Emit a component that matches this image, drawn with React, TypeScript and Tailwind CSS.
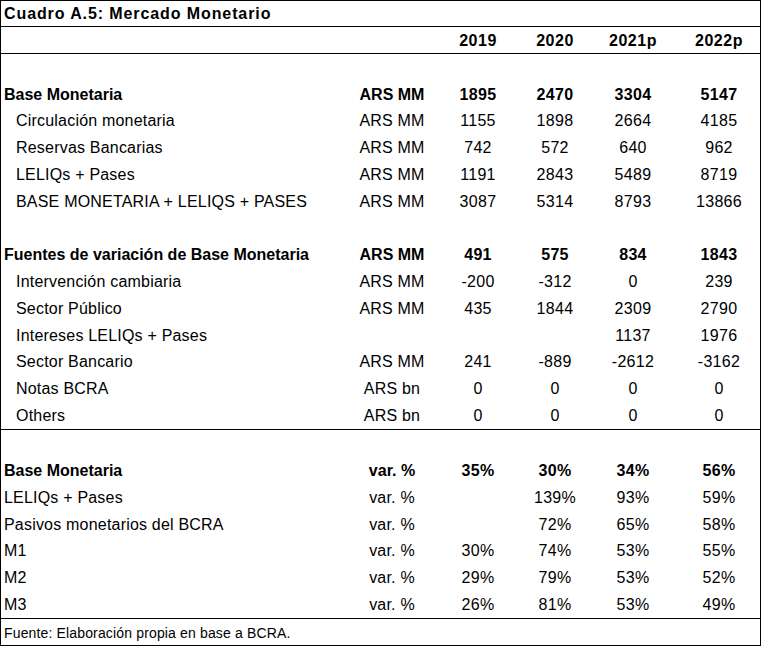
import React from 'react';

type Row = {
  label?: string;
  unit?: string;
  values?: string[];
  bold?: boolean;
  indent?: boolean;
};

const cols = 'grid grid-cols-[349px_84px_88px_66px_90px_82px] items-center';

const monetaria: Row[] = [
  {},
  { label: 'Base Monetaria', unit: 'ARS MM', values: ['1895', '2470', '3304', '5147'], bold: true },
  { label: 'Circulación monetaria', unit: 'ARS MM', values: ['1155', '1898', '2664', '4185'], indent: true },
  { label: 'Reservas Bancarias', unit: 'ARS MM', values: ['742', '572', '640', '962'], indent: true },
  { label: 'LELIQs + Pases', unit: 'ARS MM', values: ['1191', '2843', '5489', '8719'], indent: true },
  { label: 'BASE MONETARIA + LELIQS + PASES', unit: 'ARS MM', values: ['3087', '5314', '8793', '13866'], indent: true },
  {},
  { label: 'Fuentes de variación de Base Monetaria', unit: 'ARS MM', values: ['491', '575', '834', '1843'], bold: true },
  { label: 'Intervención cambiaria', unit: 'ARS MM', values: ['-200', '-312', '0', '239'], indent: true },
  { label: 'Sector Público', unit: 'ARS MM', values: ['435', '1844', '2309', '2790'], indent: true },
  { label: 'Intereses LELIQs + Pases', unit: '', values: ['', '', '1137', '1976'], indent: true },
  { label: 'Sector Bancario', unit: 'ARS MM', values: ['241', '-889', '-2612', '-3162'], indent: true },
  { label: 'Notas BCRA', unit: 'ARS bn', values: ['0', '0', '0', '0'], indent: true },
  { label: 'Others', unit: 'ARS bn', values: ['0', '0', '0', '0'], indent: true },
];

const variaciones: Row[] = [
  {},
  { label: 'Base Monetaria', unit: 'var. %', values: ['35%', '30%', '34%', '56%'], bold: true },
  { label: 'LELIQs + Pases', unit: 'var. %', values: ['', '139%', '93%', '59%'] },
  { label: 'Pasivos monetarios del BCRA', unit: 'var. %', values: ['', '72%', '65%', '58%'] },
  { label: 'M1', unit: 'var. %', values: ['30%', '74%', '53%', '55%'] },
  { label: 'M2', unit: 'var. %', values: ['29%', '79%', '53%', '52%'] },
  { label: 'M3', unit: 'var. %', values: ['26%', '81%', '53%', '49%'] },
];

const TableRow: React.FC<{ row: Row }> = ({ row }) => (
  <div className={`${cols} flex-1 pt-[1px] ${row.bold ? 'font-bold' : 'tracking-[0.2px]'}`}>
    <div className={`whitespace-nowrap ${row.indent ? 'pl-[15px]' : 'pl-[3px]'}`}>{row.label}</div>
    <div className="text-center whitespace-nowrap">{row.unit}</div>
    {(row.values ?? ['', '', '', '']).map((v, i) => (
      <div key={i} className="text-center tracking-[0.3px]">
        {v}
      </div>
    ))}
  </div>
);

export default function App() {
  return (
    <div className="bg-white w-[763px] h-[647px] text-black font-['Liberation_Sans',Arial,sans-serif] text-[16px] leading-[18px]">
      <div className="w-[761px] h-[646px] border border-black flex flex-col">
        <div className="h-[26px] flex items-center pl-[3px] font-bold tracking-[0.9px] border-b border-black">
          Cuadro A.5: Mercado Monetario
        </div>
        <div className={`${cols} h-[27px] pt-[2px] font-bold tracking-[0.5px] border-b border-black`}>
          <div />
          <div />
          <div className="text-center">2019</div>
          <div className="text-center">2020</div>
          <div className="text-center">2021p</div>
          <div className="text-center">2022p</div>
        </div>
        <div className="h-[376px] flex flex-col border-b border-black">
          {monetaria.map((r, i) => (
            <TableRow key={i} row={r} />
          ))}
        </div>
        <div className="h-[189px] flex flex-col border-b border-black">
          {variaciones.map((r, i) => (
            <TableRow key={i} row={r} />
          ))}
        </div>
        <div className="flex-1 flex items-center pl-[3px] pt-[2px] text-[14px] tracking-[0.15px]">
          Fuente: Elaboración propia en base a BCRA.
        </div>
      </div>
    </div>
  );
}
